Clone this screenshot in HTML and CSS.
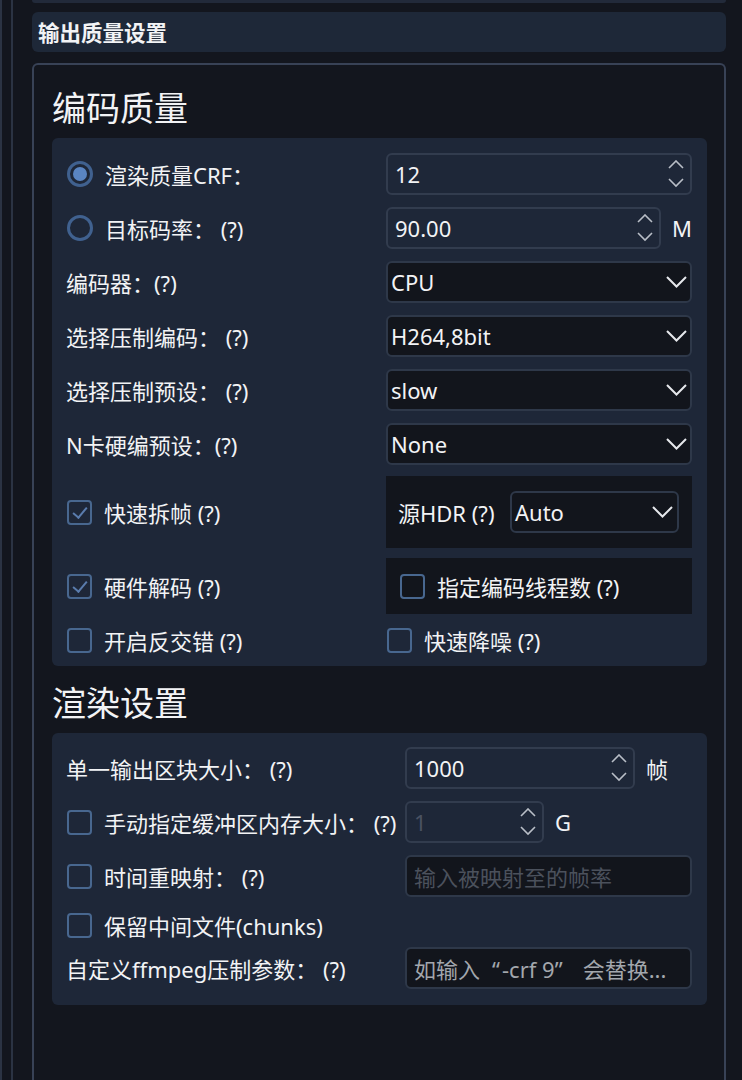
FILE: index.html
```html
<!DOCTYPE html>
<html lang="zh-CN">
<head>
    <meta charset="UTF-8">
    <title>输出质量设置</title>
    <link rel="stylesheet" href="styles.css">
</head>
<body>
<div class="rail">
    <div class="rail-inner">
        <div class="top-bar"></div>
        <div class="title-bar">输出质量设置</div>

        <div class="group">
            <h2 class="heading">编码质量</h2>
            <div class="panel panel-quality">
                <div class="row">
                    <label class="opt"><span class="radio on"></span>渲染质量CRF：</label>
                    <div class="spin">
                        <span class="val">12</span>
                        <span class="arrows">
                            <svg width="16" height="28" viewBox="0 0 16 28"><path d="M1 8 L8 1 L15 8 M1 19 L8 26 L15 19" fill="none" stroke="#b9bec7" stroke-width="1.6"/></svg>
                        </span>
                    </div>
                </div>
                <div class="row">
                    <label class="opt"><span class="radio"></span>目标码率： (?)</label>
                    <div class="with-unit">
                        <div class="spin spin-rate">
                            <span class="val">90.00</span>
                            <span class="arrows">
                                <svg width="16" height="28" viewBox="0 0 16 28"><path d="M1 8 L8 1 L15 8 M1 19 L8 26 L15 19" fill="none" stroke="#b9bec7" stroke-width="1.6"/></svg>
                            </span>
                        </div>
                        <span class="unit">M</span>
                    </div>
                </div>
                <div class="row">
                    <span class="lbl">编码器：(?)</span>
                    <div class="combo"><span class="val">CPU</span>
                        <svg width="21" height="12" viewBox="0 0 21 12"><path d="M1 1 L10.5 10.5 L20 1" fill="none" stroke="#e6e8ec" stroke-width="2"/></svg>
                    </div>
                </div>
                <div class="row">
                    <span class="lbl">选择压制编码： (?)</span>
                    <div class="combo"><span class="val">H264,8bit</span>
                        <svg width="21" height="12" viewBox="0 0 21 12"><path d="M1 1 L10.5 10.5 L20 1" fill="none" stroke="#e6e8ec" stroke-width="2"/></svg>
                    </div>
                </div>
                <div class="row">
                    <span class="lbl">选择压制预设： (?)</span>
                    <div class="combo"><span class="val">slow</span>
                        <svg width="21" height="12" viewBox="0 0 21 12"><path d="M1 1 L10.5 10.5 L20 1" fill="none" stroke="#e6e8ec" stroke-width="2"/></svg>
                    </div>
                </div>
                <div class="row">
                    <span class="lbl">N卡硬编预设：(?)</span>
                    <div class="combo"><span class="val">None</span>
                        <svg width="21" height="12" viewBox="0 0 21 12"><path d="M1 1 L10.5 10.5 L20 1" fill="none" stroke="#e6e8ec" stroke-width="2"/></svg>
                    </div>
                </div>
                <div class="row row-hdr">
                    <label class="opt"><span class="check on"></span>快速拆帧 (?)</label>
                    <div class="dark-box box-hdr">
                        <span class="lbl">源HDR (?)</span>
                        <div class="combo combo-hdr"><span class="val">Auto</span>
                            <svg width="21" height="12" viewBox="0 0 21 12"><path d="M1 1 L10.5 10.5 L20 1" fill="none" stroke="#e6e8ec" stroke-width="2"/></svg>
                        </div>
                    </div>
                </div>
                <div class="row row-threads">
                    <label class="opt"><span class="check on"></span>硬件解码 (?)</label>
                    <div class="dark-box box-threads">
                        <label class="opt"><span class="check"></span>指定编码线程数 (?)</label>
                    </div>
                </div>
                <div class="row row-last">
                    <label class="opt"><span class="check"></span>开启反交错 (?)</label>
                    <label class="opt"><span class="check"></span>快速降噪 (?)</label>
                </div>
            </div>

            <h2 class="heading">渲染设置</h2>
            <div class="panel panel-render">
                <div class="row">
                    <span class="lbl">单一输出区块大小： (?)</span>
                    <div class="with-unit">
                        <div class="spin spin-chunk">
                            <span class="val">1000</span>
                            <span class="arrows">
                                <svg width="16" height="28" viewBox="0 0 16 28"><path d="M1 8 L8 1 L15 8 M1 19 L8 26 L15 19" fill="none" stroke="#b9bec7" stroke-width="1.6"/></svg>
                            </span>
                        </div>
                        <span class="unit">帧</span>
                    </div>
                </div>
                <div class="row">
                    <label class="opt"><span class="check"></span>手动指定缓冲区内存大小： (?)</label>
                    <div class="with-unit">
                        <div class="spin spin-mem">
                            <span class="val off">1</span>
                            <span class="arrows">
                                <svg width="16" height="28" viewBox="0 0 16 28"><path d="M1 8 L8 1 L15 8 M1 19 L8 26 L15 19" fill="none" stroke="#b9bec7" stroke-width="1.6"/></svg>
                            </span>
                        </div>
                        <span class="unit">G</span>
                    </div>
                </div>
                <div class="row">
                    <label class="opt"><span class="check"></span>时间重映射： (?)</label>
                    <div class="line-edit"><span class="ph dim">输入被映射至的帧率</span></div>
                </div>
                <div class="row row-keep">
                    <label class="opt"><span class="check"></span>保留中间文件(chunks)</label>
                </div>
                <div class="row">
                    <span class="lbl">自定义ffmpeg压制参数： (?)</span>
                    <div class="line-edit"><span class="ph">如输入<span class="q-open">“</span>-crf 9<span class="q-close">”</span>会替换...</span></div>
                </div>
            </div>
        </div>
    </div>
</div>
</body>
</html>
```

FILE: styles.css
```css
*{
    box-sizing: border-box;
}
body{
    margin: 0;
    background: #13161e;
    color: #f2f3f5;
    font-family: "Noto Sans", "Noto Sans CJK SC", sans-serif;
    font-size: 22px;
    overflow: hidden;
}
.rail{
    border-left: 2px solid #2b3343;
    padding-left: 9px;
    height: 1080px;
}
.rail-inner{
    border-left: 2px solid #2b3343;
    padding-left: 19px;
    height: 100%;
    width: 715px;
}
.top-bar{
    height: 3px;
    background: #222a3a;
    border-radius: 0 0 6px 6px;
    margin-bottom: 9px;
}
.title-bar{
    height: 40px;
    line-height: 42px;
    background: #1e2838;
    border-radius: 6px;
    padding-left: 6px;
    font-size: 21.5px;
    font-weight: bold;
}
.group{
    margin-top: 11px;
    border: 2px solid #384256;
    border-bottom: none;
    border-radius: 6px 6px 0 0;
    padding: 19px 17px 0 18px;
    height: 1020px;
}
.heading{
    margin: 0 0 6px;
    font-size: 34px;
    font-weight: normal;
    line-height: 48px;
    height: 48px;
}
.panel{
    background: #1e2738;
    border-radius: 6px;
    padding: 15px 15px 12px 14px;
    display: flex;
    flex-direction: column;
    gap: 12px;
    margin-bottom: 13px;
}
.row{
    display: grid;
    grid-template-columns: 320px 306px;
    align-items: center;
    height: 42px;
}
.panel-render{
    padding-top: 14px;
    padding-bottom: 16px;
}
.panel-render .row{
    grid-template-columns: 339px 287px;
}
.row-hdr{
    height: 72px;
    margin-top: -1px;
}
.row-threads{
    height: 56px;
    margin-top: -2px;
}
.row-last{
    height: 30px;
    margin-top: -2px;
}
.row-keep{
    height: 28px;
    margin-bottom: -2px;
}
.lbl, .opt{
    white-space: nowrap;
}
.opt{
    display: flex;
    align-items: center;
    gap: 12px;
    margin-left: 1px;
}
.radio{
    width: 26px;
    height: 26px;
    border-radius: 50%;
    border: 3px solid #40618f;
    display: flex;
    align-items: center;
    justify-content: center;
    flex: none;
}
.radio.on:after{
    content: "";
    width: 14px;
    height: 14px;
    border-radius: 50%;
    background: #5a85c2;
}
.check{
    width: 25px;
    height: 25px;
    border: 2px solid #48678f;
    border-radius: 4px;
    flex: none;
    position: relative;
}
.check.on:after{
    content: "";
    position: absolute;
    left: 7px;
    top: 2px;
    width: 6px;
    height: 12px;
    border-right: 2px solid #5a7cad;
    border-bottom: 2px solid #5a7cad;
    transform: rotate(40deg);
}
.spin, .combo, .line-edit{
    height: 42px;
    border-radius: 6px;
    display: flex;
    align-items: center;
}
.spin{
    background: #1e2738;
    border: 2px solid #323c4e;
    padding: 0 6px 0 7px;
    justify-content: space-between;
}
.arrows{
    display: flex;
}
.val.off{
    color: #4a5262;
}
.with-unit{
    display: flex;
    align-items: center;
    gap: 11px;
}
.spin-rate{
    width: 275px;
}
.spin-chunk{
    width: 230px;
}
.spin-mem{
    width: 139px;
}
.combo{
    background: #12151c;
    border: 2px solid #2e3849;
    padding: 0 3px 0 3px;
    justify-content: space-between;
}
.dark-box{
    background: #12151c;
    display: flex;
    align-items: center;
    height: 100%;
}
.box-hdr{
    padding: 0 13px 0 12px;
    justify-content: space-between;
}
.combo-hdr{
    width: 169px;
    padding-right: 4px;
}
.box-threads{
    padding-left: 13px;
}
.line-edit{
    background: #12151c;
    border: 2px solid #2e3849;
    padding-left: 7px;
}
.ph{
    color: #a3a7ad;
    white-space: nowrap;
}
.ph.dim{
    color: #4b515c;
}
.q-open, .q-close{
    display: inline-block;
    width: 22px;
}
.q-open{
    text-align: right;
    padding-right: 2px;
}
.q-close{
    text-align: left;
    width: 28px;
}
```
